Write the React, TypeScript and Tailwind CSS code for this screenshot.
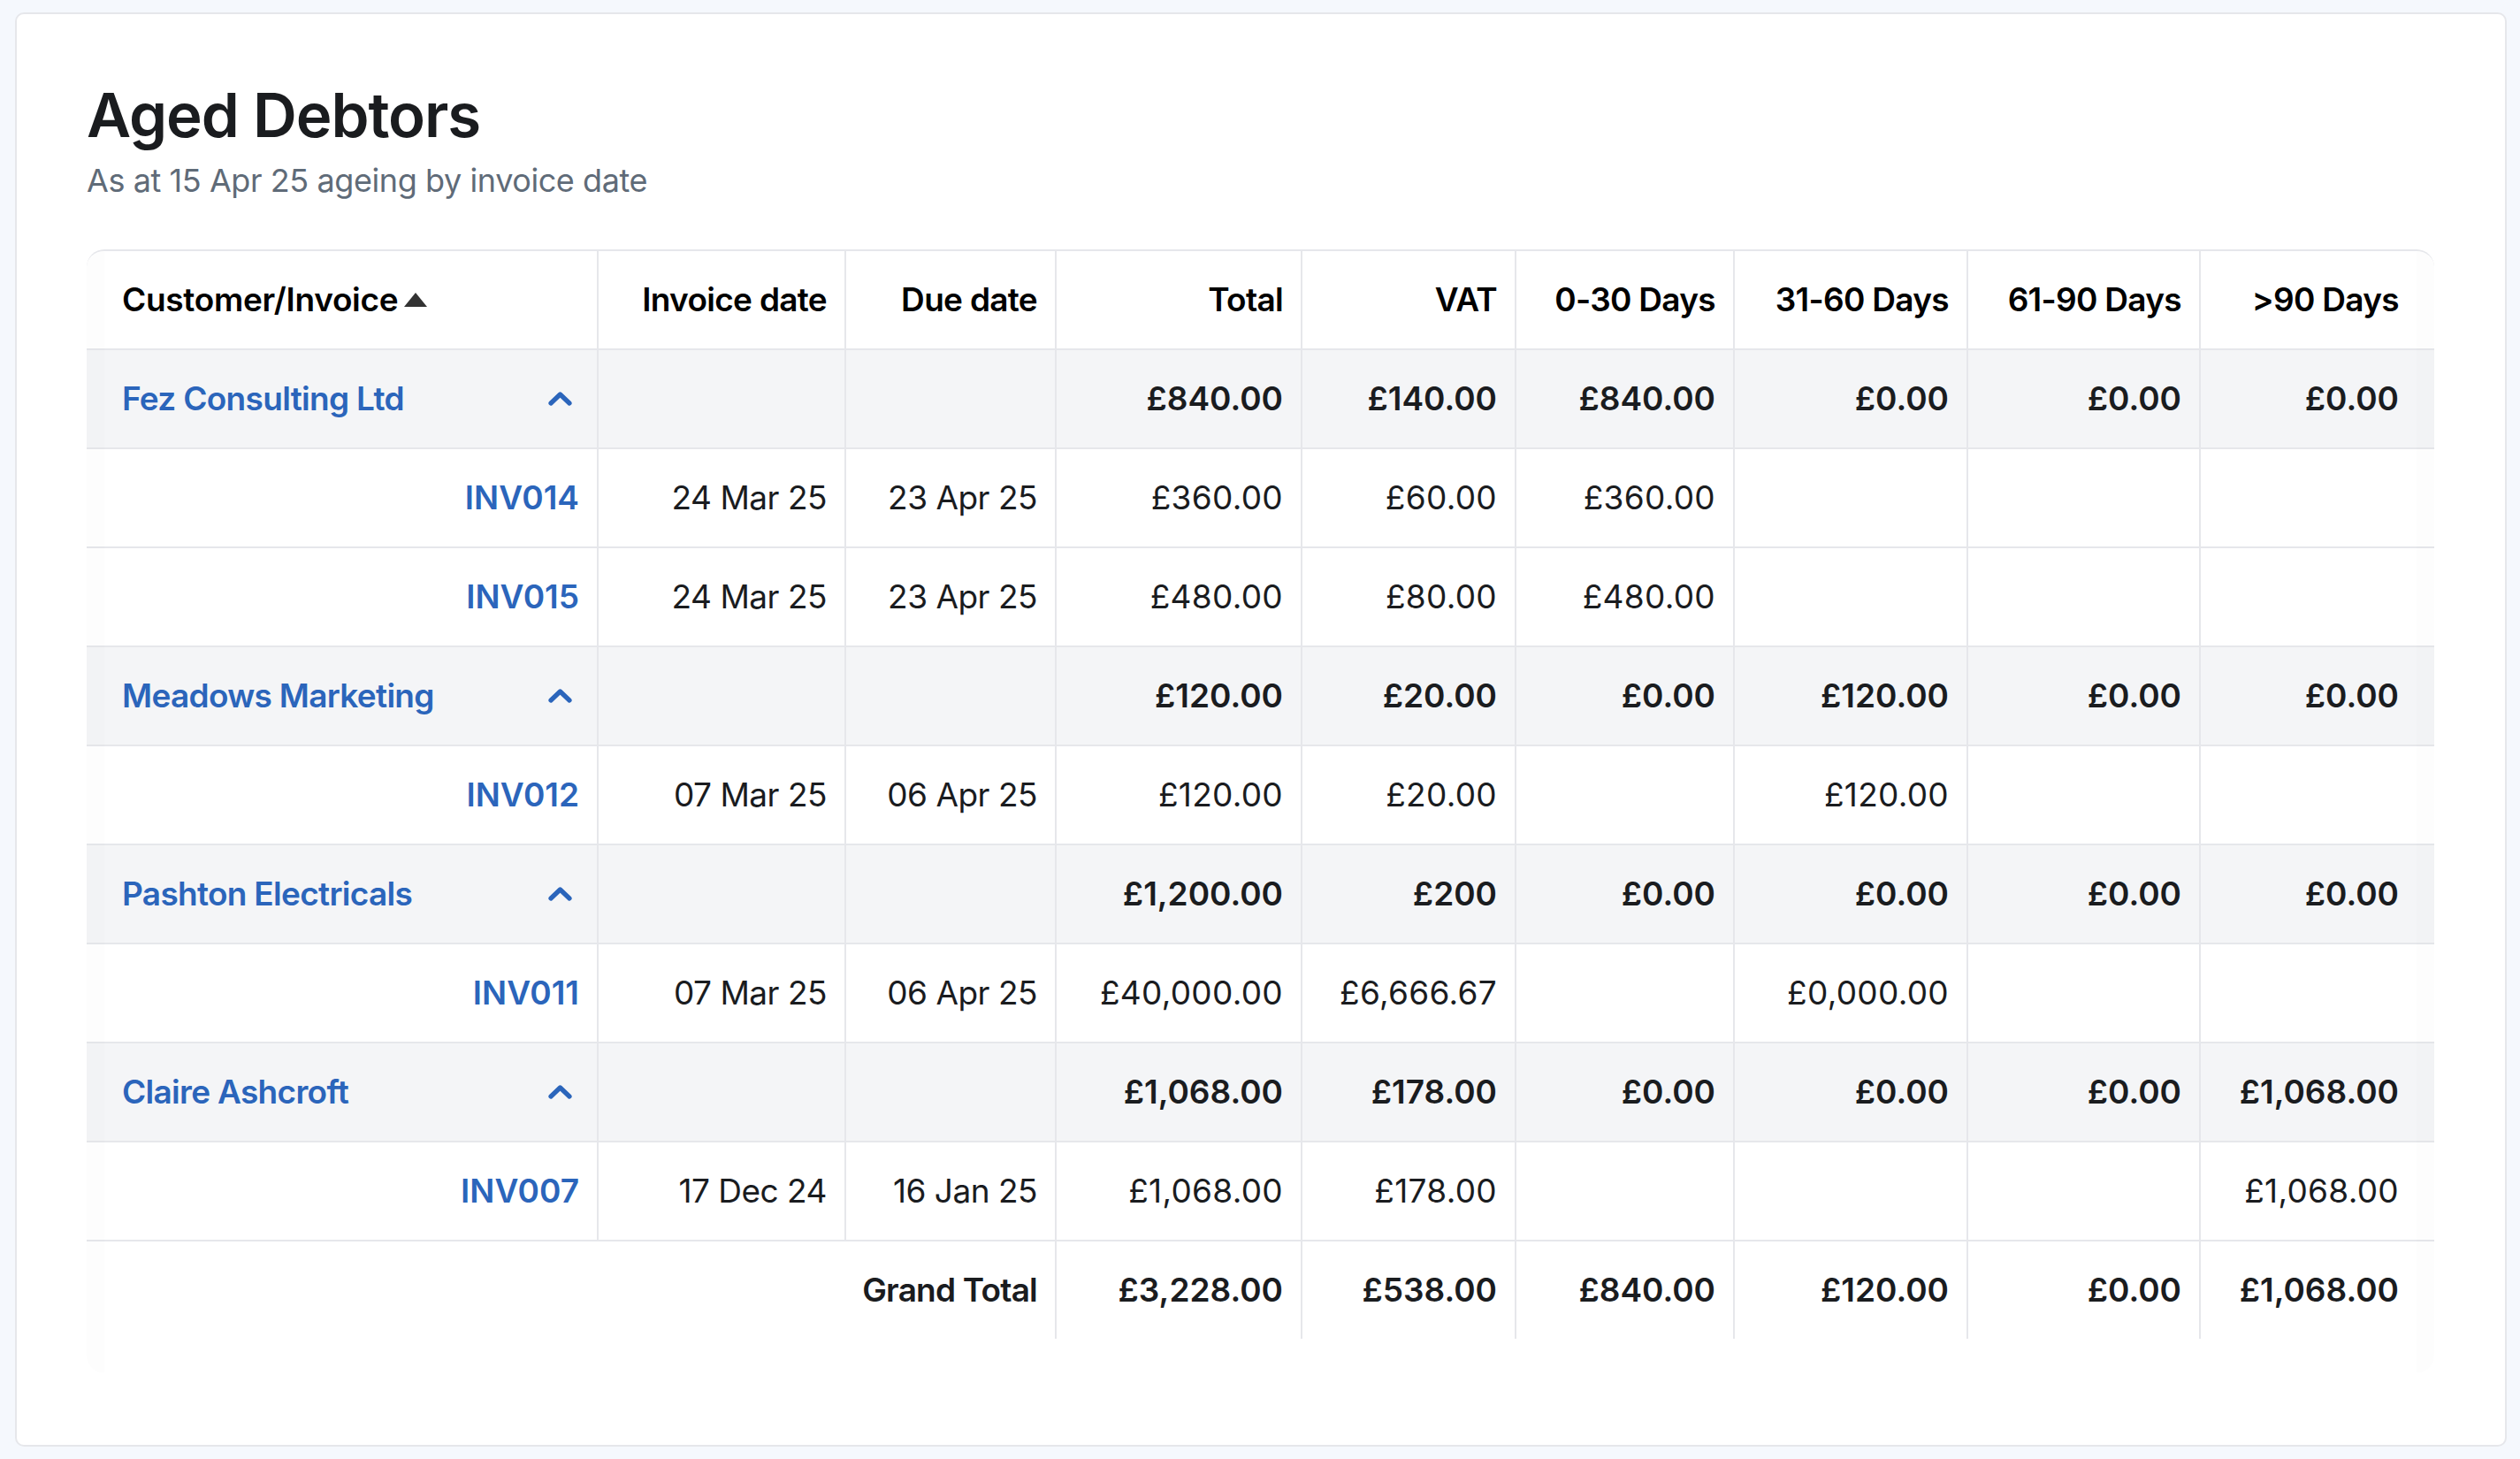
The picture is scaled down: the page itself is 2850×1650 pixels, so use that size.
const widths = [579, 280, 238, 278, 242, 247, 264, 263, 264];

type Row = {
  kind: "group" | "invoice";
  name: string;
  invoiceDate?: string;
  dueDate?: string;
  values: string[];
};

const rows: Row[] = [
  { kind: "group", name: "Fez Consulting Ltd", values: ["£840.00", "£140.00", "£840.00", "£0.00", "£0.00", "£0.00"] },
  { kind: "invoice", name: "INV014", invoiceDate: "24 Mar 25", dueDate: "23 Apr 25", values: ["£360.00", "£60.00", "£360.00", "", "", ""] },
  { kind: "invoice", name: "INV015", invoiceDate: "24 Mar 25", dueDate: "23 Apr 25", values: ["£480.00", "£80.00", "£480.00", "", "", ""] },
  { kind: "group", name: "Meadows Marketing", values: ["£120.00", "£20.00", "£0.00", "£120.00", "£0.00", "£0.00"] },
  { kind: "invoice", name: "INV012", invoiceDate: "07 Mar 25", dueDate: "06 Apr 25", values: ["£120.00", "£20.00", "", "£120.00", "", ""] },
  { kind: "group", name: "Pashton Electricals", values: ["£1,200.00", "£200", "£0.00", "£0.00", "£0.00", "£0.00"] },
  { kind: "invoice", name: "INV011", invoiceDate: "07 Mar 25", dueDate: "06 Apr 25", values: ["£40,000.00", "£6,666.67", "", "£0,000.00", "", ""] },
  { kind: "group", name: "Claire Ashcroft", values: ["£1,068.00", "£178.00", "£0.00", "£0.00", "£0.00", "£1,068.00"] },
  { kind: "invoice", name: "INV007", invoiceDate: "17 Dec 24", dueDate: "16 Jan 25", values: ["£1,068.00", "£178.00", "", "", "", "£1,068.00"] },
];

const headers = ["Invoice date", "Due date", "Total", "VAT", "0-30 Days", "31-60 Days", "61-90 Days"];
const grand = ["£3,228.00", "£538.00", "£840.00", "£120.00", "£0.00", "£1,068.00"];

function Chevron() {
  return (
    <svg width="27" height="17" viewBox="0 0 27 17" fill="none" className="block">
      <path d="M3 13L13.5 3L24 13" stroke="#2b65bb" strokeWidth="5.2" strokeLinecap="round" strokeLinejoin="round" />
    </svg>
  );
}

export default function App() {
  const font = "font-['Inter','Liberation_Sans',sans-serif]";
  const cell = "h-[112px] p-0 border-b-2 border-r-2 border-[#e6e7eb] pr-[20px] text-right align-middle";
  const lastCell = "h-[112px] p-0 border-b-2 border-[#e6e7eb] pr-[40px] text-right align-middle";
  return (
    <div className={`${font} h-[1650px] w-[2850px] bg-[#f5f8fd] pt-[14px] pr-[15px] pb-[14px] pl-[17px]`}>
      <div className="h-full rounded-[10px] border-2 border-[#e6e7eb] bg-white pl-[79px] pr-[79px]">
        <h1 className="pt-[71px] text-[69px] leading-[86px] font-semibold tracking-[-1.1px] text-[#1a1c1f]">Aged Debtors</h1>
        <p className="mt-[8px] text-[36px] leading-[46px] tracking-[-0.42px] text-[#5f6b78]">As at 15 Apr 25 ageing by invoice date</p>
        <div className="relative mt-[55px] h-[1271px] w-[2655px] overflow-hidden rounded-[20px] border-t-2 border-[#e6e7eb]">
          <table className="w-[2655px] table-fixed border-separate border-spacing-0 text-[37px] text-[#1a1c1f]">
            <colgroup>
              {widths.map((w, i) => (
                <col key={i} style={{ width: w }} />
              ))}
            </colgroup>
            <thead>
              <tr className="font-semibold tracking-[-0.7px] text-black">
                <th className={`${cell} pl-[40px] text-left font-semibold tracking-[-0.3px]`}>
                  <span className="flex items-center gap-[7px]">
                    Customer/Invoice
                    <svg width="26" height="16" viewBox="0 0 26 16" className="block">
                      <path d="M13 0L26 16H0Z" fill="#333333" />
                    </svg>
                  </span>
                </th>
                {headers.map((h) => (
                  <th key={h} className={`${cell} font-semibold`}>{h}</th>
                ))}
                <th className={`${lastCell} font-semibold`}>&gt;90 Days</th>
              </tr>
            </thead>
            <tbody>
              {rows.map((r) =>
                r.kind === "group" ? (
                  <tr key={r.name} className="bg-[#f4f5f7] font-semibold">
                    <td className={`${cell} pl-[40px] text-left tracking-[-0.7px] text-[#2b65bb]`}>
                      <span className="flex items-center justify-between pr-[8px]">
                        {r.name}
                        <Chevron />
                      </span>
                    </td>
                    <td className={cell}></td>
                    <td className={cell}></td>
                    {r.values.map((v, i) => (
                      <td key={i} className={i === 5 ? lastCell : cell}>{v}</td>
                    ))}
                  </tr>
                ) : (
                  <tr key={r.name} className="tracking-[0.3px]">
                    <td className={`${cell} font-semibold tracking-[0px] text-[#2b65bb]`}>{r.name}</td>
                    <td className={`${cell} tracking-[-0.5px]`}>{r.invoiceDate}</td>
                    <td className={`${cell} tracking-[-0.5px]`}>{r.dueDate}</td>
                    {r.values.map((v, i) => (
                      <td key={i} className={i === 5 ? lastCell : cell}>{v}</td>
                    ))}
                  </tr>
                )
              )}
              <tr className="font-semibold">
                <td colSpan={3} className="h-[110px] border-r-2 border-[#e6e7eb] p-0 pr-[20px] text-right tracking-[-0.8px]">Grand Total</td>
                {grand.map((v, i) => (
                  <td key={i} className={i === 5 ? "h-[110px] p-0 pr-[40px] text-right" : "h-[110px] border-r-2 border-[#e6e7eb] p-0 pr-[20px] text-right"}>{v}</td>
                ))}
              </tr>
            </tbody>
          </table>
          <div className="absolute inset-y-0 left-0 w-[20px] bg-black/[0.008]"></div>
          <div className="absolute inset-y-0 right-0 w-[20px] bg-black/[0.008]"></div>
        </div>
      </div>
    </div>
  );
}
